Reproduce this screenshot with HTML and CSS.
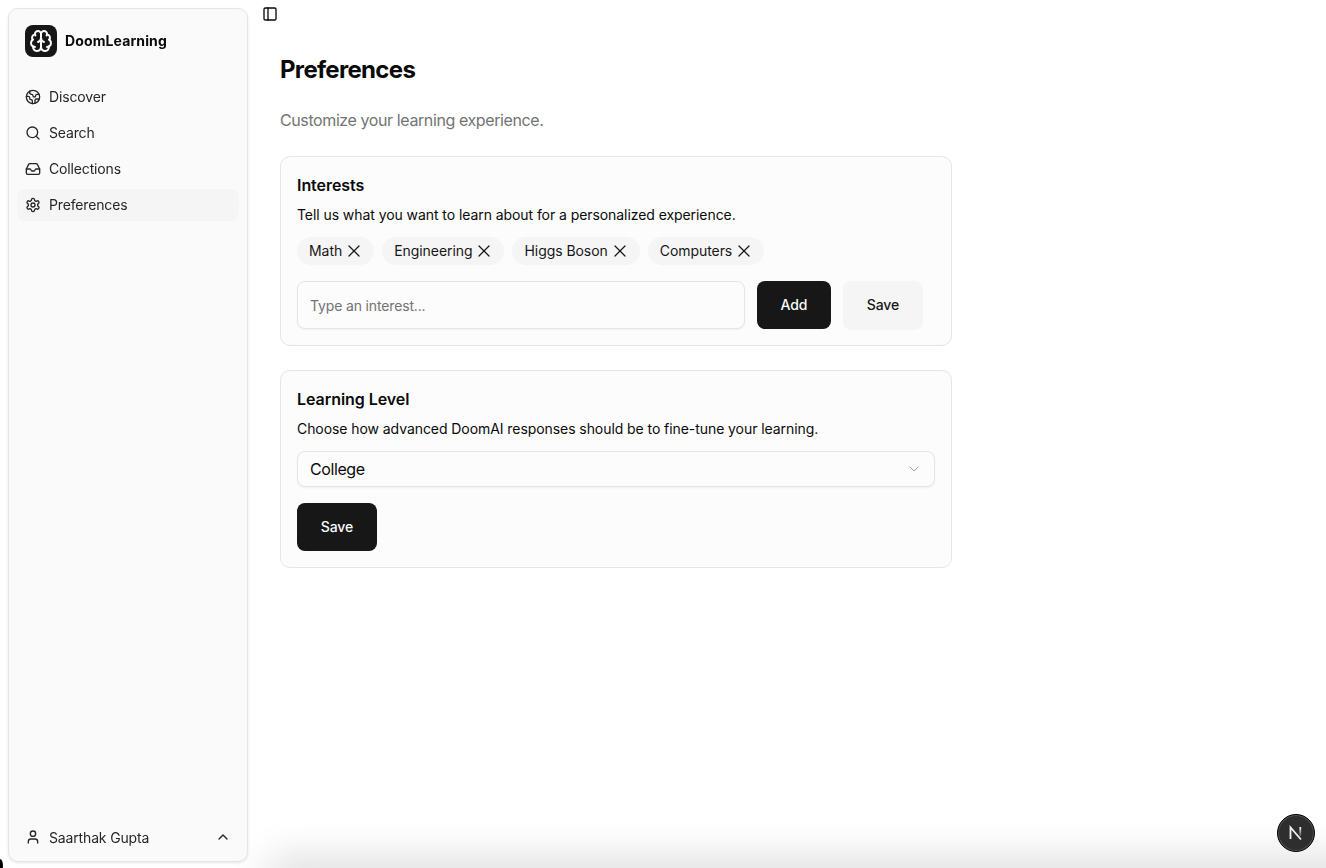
FILE: index.html
```html
<!DOCTYPE html>
<html lang="en">
<head>
  <meta charset="UTF-8" />
  <meta name="viewport" content="width=device-width, initial-scale=1.0"/>
  <title>DoomLearning - Preferences</title>
  <link rel="stylesheet" href="styles.css">
</head>
<body>

  <aside class="sidebar-wrap">
    <div class="sidebar">
      <div class="brand">
        <span class="brand-logo">
          <svg class="icon-brain" viewBox="0 0 24 24">
            <path d="M12 5a3 3 0 1 0-5.997.125 4 4 0 0 0-2.526 5.77 4 4 0 0 0 .556 6.588A4 4 0 1 0 12 18Z"/>
            <path d="M12 5a3 3 0 1 1 5.997.125 4 4 0 0 1 2.526 5.77 4 4 0 0 1-.556 6.588A4 4 0 1 1 12 18Z"/>
            <path d="M15 13a4.5 4.5 0 0 1-3-4 4.5 4.5 0 0 1-3 4"/>
            <path d="M17.599 6.5a3 3 0 0 0 .399-1.375"/>
            <path d="M6.003 5.125A3 3 0 0 0 6.401 6.5"/>
            <path d="M3.477 10.896a4 4 0 0 1 .585-.396"/>
            <path d="M19.938 10.5a4 4 0 0 1 .585.396"/>
            <path d="M6 18a4 4 0 0 1-1.967-.516"/>
            <path d="M19.967 17.484A4 4 0 0 1 18 18"/>
          </svg>
        </span>
        <span class="brand-name">DoomLearning</span>
      </div>

      <nav class="nav">
        <a class="nav-item">
          <svg class="icon" viewBox="0 0 24 24">
            <path d="M21.54 15H17a2 2 0 0 0-2 2v4.54"/>
            <path d="M7 3.34V5a3 3 0 0 0 3 3a2 2 0 0 1 2 2c0 1.1.9 2 2 2a2 2 0 0 0 2-2c0-1.1.9-2 2-2h3.17"/>
            <path d="M11 21.95V18a2 2 0 0 0-2-2a2 2 0 0 1-2-2v-1a2 2 0 0 0-2-2H2.05"/>
            <circle cx="12" cy="12" r="10"/>
          </svg>
          <span class="nav-label">Discover</span>
        </a>
        <a class="nav-item">
          <svg class="icon" viewBox="0 0 24 24">
            <path d="m21 21-4.34-4.34"/>
            <circle cx="11" cy="11" r="8"/>
          </svg>
          <span class="nav-label">Search</span>
        </a>
        <a class="nav-item">
          <svg class="icon" viewBox="0 0 24 24">
            <polyline points="22 12 16 12 14 15 10 15 8 12 2 12"/>
            <path d="M5.45 5.11 2 12v6a2 2 0 0 0 2 2h16a2 2 0 0 0 2-2v-6l-3.45-6.89A2 2 0 0 0 16.76 4H7.24a2 2 0 0 0-1.79 1.11z"/>
          </svg>
          <span class="nav-label">Collections</span>
        </a>
        <a class="nav-item active">
          <svg class="icon" viewBox="0 0 24 24">
            <path d="M12.22 2h-.44a2 2 0 0 0-2 2v.18a2 2 0 0 1-1 1.73l-.43.25a2 2 0 0 1-2 0l-.15-.08a2 2 0 0 0-2.73.73l-.22.38a2 2 0 0 0 .73 2.73l.15.1a2 2 0 0 1 1 1.72v.51a2 2 0 0 1-1 1.74l-.15.09a2 2 0 0 0-.73 2.73l.22.38a2 2 0 0 0 2.73.73l.15-.08a2 2 0 0 1 2 0l.43.25a2 2 0 0 1 1 1.73V20a2 2 0 0 0 2 2h.44a2 2 0 0 0 2-2v-.18a2 2 0 0 1 1-1.73l.43-.25a2 2 0 0 1 2 0l.15.08a2 2 0 0 0 2.73-.73l.22-.39a2 2 0 0 0-.73-2.73l-.15-.08a2 2 0 0 1-1-1.74v-.5a2 2 0 0 1 1-1.74l.15-.09a2 2 0 0 0 .73-2.73l-.22-.38a2 2 0 0 0-2.73-.73l-.15.08a2 2 0 0 1-2 0l-.43-.25a2 2 0 0 1-1-1.73V4a2 2 0 0 0-2-2z"/>
            <circle cx="12" cy="12" r="3"/>
          </svg>
          <span class="nav-label">Preferences</span>
        </a>
      </nav>

      <div class="user-row">
        <svg class="icon" viewBox="0 0 24 24">
          <path d="M19 21v-2a4 4 0 0 0-4-4H9a4 4 0 0 0-4 4v2"/>
          <circle cx="12" cy="7" r="4"/>
        </svg>
        <span class="user-name">Saarthak Gupta</span>
        <svg class="icon" viewBox="0 0 24 24"><path d="m18 15-6-6-6 6"/></svg>
      </div>
    </div>
  </aside>

  <main class="main">
    <div class="topbar">
      <svg class="icon" viewBox="0 0 24 24">
        <rect width="18" height="18" x="3" y="3" rx="2"/>
        <path d="M9 3v18"/>
      </svg>
    </div>

    <div class="content">
      <h1 class="page-title">Preferences</h1>
      <p class="page-sub">Customize your learning experience.</p>

      <section class="card">
        <h2 class="card-title">Interests</h2>
        <p class="card-desc">Tell us what you want to learn about for a personalized experience.</p>
        <div class="chips">
          <span class="chip"><span class="chip-label">Math</span><svg class="icon" viewBox="0 0 24 24"><path d="M18 6 6 18"/><path d="m6 6 12 12"/></svg></span>
          <span class="chip"><span class="chip-label">Engineering</span><svg class="icon" viewBox="0 0 24 24"><path d="M18 6 6 18"/><path d="m6 6 12 12"/></svg></span>
          <span class="chip"><span class="chip-label">Higgs Boson</span><svg class="icon" viewBox="0 0 24 24"><path d="M18 6 6 18"/><path d="m6 6 12 12"/></svg></span>
          <span class="chip"><span class="chip-label">Computers</span><svg class="icon" viewBox="0 0 24 24"><path d="M18 6 6 18"/><path d="m6 6 12 12"/></svg></span>
        </div>
        <div class="add-row">
          <input class="text-input" type="text" placeholder="Type an interest..." />
          <button class="btn btn-dark btn-add">Add</button>
          <button class="btn btn-light">Save</button>
        </div>
      </section>

      <section class="card">
        <h2 class="card-title">Learning Level</h2>
        <p class="card-desc">Choose how advanced DoomAI responses should be to fine-tune your learning.</p>
        <div class="select-box">
          <span>College</span>
          <svg class="icon" viewBox="0 0 24 24"><path d="m6 9 6 6 6-6"/></svg>
        </div>
        <button class="btn btn-dark btn-save">Save</button>
      </section>
    </div>
  </main>

  <div class="bottom-fade"></div>
  <div class="corner-mark"></div>
  <div class="dev-badge">
    <svg class="next-logo" viewBox="0 0 16 16">
      <defs>
        <linearGradient id="next-fade" x1="0" y1="0" x2="0" y2="1">
          <stop offset="0" stop-color="#fff"/>
          <stop offset="1" stop-color="#fff" stop-opacity="0.15"/>
        </linearGradient>
      </defs>
      <path class="next-stroke" d="M2.5 14V2.5L13 14.5"/>
      <rect x="11.4" y="2" width="1.8" height="9" fill="url(#next-fade)"/>
    </svg>
  </div>

</body>
</html>
```

FILE: styles.css
```css
* {
  box-sizing: border-box;
}

body {
  margin: 0;
  height: 100vh;
  display: flex;
  overflow: hidden;
  background: #fff;
  color: #0a0a0a;
  font-family: Inter, "Noto Sans", sans-serif;
  font-size: 14px;
}

p, h1, h2 {
  margin: 0;
}

.icon {
  width: 16px;
  height: 16px;
  flex-shrink: 0;
  fill: none;
  stroke: currentColor;
  stroke-width: 2;
  stroke-linecap: round;
  stroke-linejoin: round;
}

.sidebar-wrap {
  width: 256px;
  flex-shrink: 0;
  padding: 8px 8px 6px;
  position: relative;
  z-index: 1;
}

.sidebar {
  height: 100%;
  display: flex;
  flex-direction: column;
  background: #fafafa;
  border: 1px solid #e5e5e5;
  border-radius: 10px;
  box-shadow: 0 1px 3px rgba(0,0,0,0.1);
}

.brand {
  display: flex;
  align-items: center;
  gap: 8px;
  padding: 16px 16px 0;
}

.brand-logo {
  width: 32px;
  height: 32px;
  display: flex;
  justify-content: center;
  align-items: center;
  background: #171717;
  border-radius: 8px;
}

.icon-brain {
  width: 24px;
  height: 24px;
  fill: none;
  stroke: #fafafa;
  stroke-width: 2;
  stroke-linecap: round;
  stroke-linejoin: round;
}

.brand-name {
  font-weight: 700;
  letter-spacing: 0.12px;
  padding-bottom: 1px;
}

.nav {
  display: flex;
  flex-direction: column;
  gap: 4px;
  margin-top: 24px;
  padding: 0 8px;
}

.nav-item {
  height: 32px;
  display: flex;
  align-items: center;
  gap: 8px;
  padding: 0 8px;
  border-radius: 8px;
  color: #262626;
  letter-spacing: -0.15px;
}

.nav-label {
  padding-bottom: 1px;
}

.nav-item.active {
  background: #f5f5f5;
}

.user-row {
  height: 32px;
  display: flex;
  align-items: center;
  gap: 8px;
  margin: auto 8px 8px;
  padding: 0 8px;
  color: #262626;
  letter-spacing: -0.15px;
}

.user-name {
  flex: 1;
}

.main {
  flex: 1;
  padding-left: 6px;
}

.topbar {
  height: 12px;
  padding-top: 6px;
  display: flex;
}

.content {
  width: 690px;
  padding: 42px 0 0 18px;
}

.page-title {
  font-size: 24px;
  line-height: 32px;
  font-weight: 700;
  letter-spacing: -0.68px;
  padding-bottom: 1px;
  margin-bottom: -1px;
}

.page-sub {
  margin-top: 22px;
  font-size: 16px;
  line-height: 24px;
  letter-spacing: -0.4px;
  color: #737373;
}

.card {
  margin-top: 24px;
  padding: 16px;
  background: #fcfcfc;
  border: 1px solid #e5e5e5;
  border-radius: 10px;
}

.card-title {
  font-size: 16px;
  line-height: 24px;
  font-weight: 600;
  letter-spacing: -0.05px;
}

.card-desc {
  margin-top: 8px;
  line-height: 20px;
  letter-spacing: -0.07px;
}

.chips {
  display: flex;
  gap: 8px;
  margin-top: 12px;
}

.chip {
  height: 28px;
  display: flex;
  align-items: center;
  gap: 2px;
  padding: 0 10px 0 12px;
  background: #f5f5f5;
  border-radius: 999px;
  color: #171717;
  letter-spacing: -0.06px;
}

.chip-label {
  padding-bottom: 1px;
}

.chip .icon {
  width: 20px;
  height: 20px;
  stroke-width: 1.5;
}

.add-row {
  height: 48px;
  display: flex;
  align-items: flex-start;
  gap: 12px;
  margin-top: 16px;
}

.text-input {
  width: 448px;
  height: 48px;
  padding: 0 12px;
  background: #fcfcfc;
  border: 1px solid #e5e5e5;
  border-radius: 8px;
  box-shadow: 0 1px 2px rgba(0,0,0,0.05);
  font: 14px Inter, sans-serif;
  letter-spacing: -0.15px;
}

.text-input::placeholder {
  color: #737373;
}

.btn {
  height: 48px;
  padding: 0 0 2px;
  border: none;
  border-radius: 8px;
  font: 500 14px Inter, sans-serif;
  letter-spacing: -0.1px;
}

.btn-dark {
  background: #171717;
  color: #fafafa;
}

.btn-light {
  width: 80px;
  height: 49px;
  background: #f5f5f5;
  color: #171717;
}

.btn-add {
  width: 74px;
}

.btn-save {
  display: block;
  width: 80px;
  margin-top: 16px;
}

.select-box {
  height: 36px;
  display: flex;
  align-items: center;
  justify-content: space-between;
  margin-top: 12px;
  padding: 0 12px;
  background: #fcfcfc;
  border: 1px solid #e5e5e5;
  border-radius: 8px;
  box-shadow: 0 1px 2px rgba(0,0,0,0.05);
  font-size: 16px;
  letter-spacing: -0.4px;
}

.select-box .icon {
  color: #a3a3a3;
  width: 16px;
  height: 16px;
  stroke-width: 1.5;
}

.bottom-fade {
  position: fixed;
  left: 275px;
  right: -60px;
  bottom: -12px;
  height: 12px;
  box-shadow: 0 0 40px 6px rgba(0,0,0,0.2);
  pointer-events: none;
}

.corner-mark {
  position: fixed;
  left: -3px;
  bottom: -5px;
  width: 6px;
  height: 14px;
  background: #000;
  border-radius: 50%;
}

.dev-badge {
  position: fixed;
  right: 11px;
  bottom: 16px;
  width: 38px;
  height: 38px;
  display: flex;
  justify-content: center;
  align-items: center;
  background: #2e2e2e;
  border: 1px solid #000;
  border-radius: 50%;
  box-shadow: inset 0 0 0 1px #555;
}

.next-logo {
  width: 16px;
  height: 16px;
}

.next-stroke {
  fill: none;
  stroke: #f0f0f0;
  stroke-width: 1.8;
}
```
